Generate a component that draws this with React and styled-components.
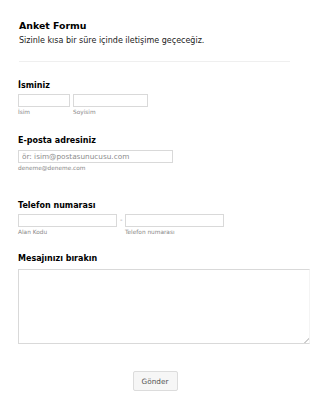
import React from "react";
import styled, { createGlobalStyle } from "styled-components";

const Global = createGlobalStyle`
  html, body { margin: 0; padding: 0; background: #fff; }
  body { font-family: "DejaVu Sans", Verdana, sans-serif; color: #000; }
  * { box-sizing: border-box; }
`;

const Page = styled.div`
  width: 310px;
  height: 409px;
  overflow: hidden;
  padding: 20px 0 0 18px;
  display: flex;
  flex-direction: column;
`;

const Header = styled.div`
  display: flex;
  flex-direction: column;
  gap: 4px;
  padding-left: 1px;
`;

const Title = styled.h1`
  margin: 0;
  font-size: 9.4px;
  line-height: 12px;
  font-weight: bold;
  color: #000;
`;

const Subtitle = styled.p`
  margin: 0;
  font-size: 8px;
  line-height: 10px;
  color: #222;
`;

const Divider = styled.hr`
  margin: 15px 0 0 1px;
  width: 271px;
  border: 0;
  border-top: 1px solid #efefef;
`;

const Field = styled.div`
  display: flex;
  flex-direction: column;
  margin-top: ${(p) => p.$top}px;
`;

const Label = styled.label`
  font-size: 8px;
  line-height: 10px;
  font-weight: bold;
  color: #000;
  margin-bottom: ${(p) => p.$gap ?? 3}px;
`;

const Row = styled.div`
  display: flex;
  align-items: flex-start;
  gap: ${(p) => p.$gap ?? 3}px;
`;

const Column = styled.div`
  display: flex;
  flex-direction: column;
  gap: 2px;
`;

const Input = styled.input`
  width: ${(p) => p.$w}px;
  height: 13px;
  margin: 0;
  border: 1px solid #d9d9d9;
  border-radius: 0;
  background: #fff;
  padding: 0 3px;
  font-family: "DejaVu Sans", Verdana, sans-serif;
  font-size: 7.3px;
  color: #333;
  outline: none;
  &::placeholder { color: #8c8c8c; }
`;

const Sub = styled.span`
  font-size: 5.8px;
  line-height: 7px;
  color: #888;
  white-space: nowrap;
`;

const Dash = styled.span`
  font-size: 7px;
  line-height: 13px;
  color: #999;
  width: 2px;
`;

const TextArea = styled.textarea`
  width: 292px;
  height: 75px;
  margin: 0;
  border: 1px solid #d9d9d9;
  border-right-color: #f4f4f4;
  border-radius: 0;
  padding: 3px;
  resize: both;
  outline: none;
  font-family: "DejaVu Sans", Verdana, sans-serif;
  display: block;
  &::-webkit-resizer {
    background: linear-gradient(
      135deg,
      transparent 82%,
      #cfcfcf 82%,
      #cfcfcf 88%,
      transparent 88%
    );
  }
`;

const ButtonRow = styled.div`
  display: flex;
  justify-content: center;
  margin: 27px 0 0 -18px;
`;

const Button = styled.button`
  width: 45px;
  height: 20px;
  padding: 0;
  border: 1px solid #dcdcdc;
  border-radius: 2px;
  background: #f6f6f6;
  color: #555;
  font-family: "DejaVu Sans", Verdana, sans-serif;
  font-size: 7.3px;
  cursor: pointer;
`;

export default function App() {
  return (
    <>
      <Global />
      <Page>
        <Header>
          <Title>Anket Formu</Title>
          <Subtitle>Sizinle kısa bir süre içinde iletişime geçeceğiz.</Subtitle>
        </Header>
        <Divider />

        <Field $top={19}>
          <Label>İsminiz</Label>
          <Row $gap={3}>
            <Column>
              <Input $w={52} />
              <Sub>İsim</Sub>
            </Column>
            <Column>
              <Input $w={75} />
              <Sub>Soyisim</Sub>
            </Column>
          </Row>
        </Field>

        <Field $top={20}>
          <Label $gap={4}>E-posta adresiniz</Label>
          <Column>
            <Input $w={155} placeholder="ör: isim@postasunucusu.com" />
            <Sub>deneme@deneme.com</Sub>
          </Column>
        </Field>

        <Field $top={29}>
          <Label>Telefon numarası</Label>
          <Row $gap={3}>
            <Column>
              <Input $w={99} />
              <Sub>Alan Kodu</Sub>
            </Column>
            <Dash>-</Dash>
            <Column>
              <Input $w={99} />
              <Sub>Telefon numarası</Sub>
            </Column>
          </Row>
        </Field>

        <Field $top={18}>
          <Label $gap={5}>Mesajınızı bırakın</Label>
          <TextArea />
        </Field>

        <ButtonRow>
          <Button>Gönder</Button>
        </ButtonRow>
      </Page>
    </>
  );
}
